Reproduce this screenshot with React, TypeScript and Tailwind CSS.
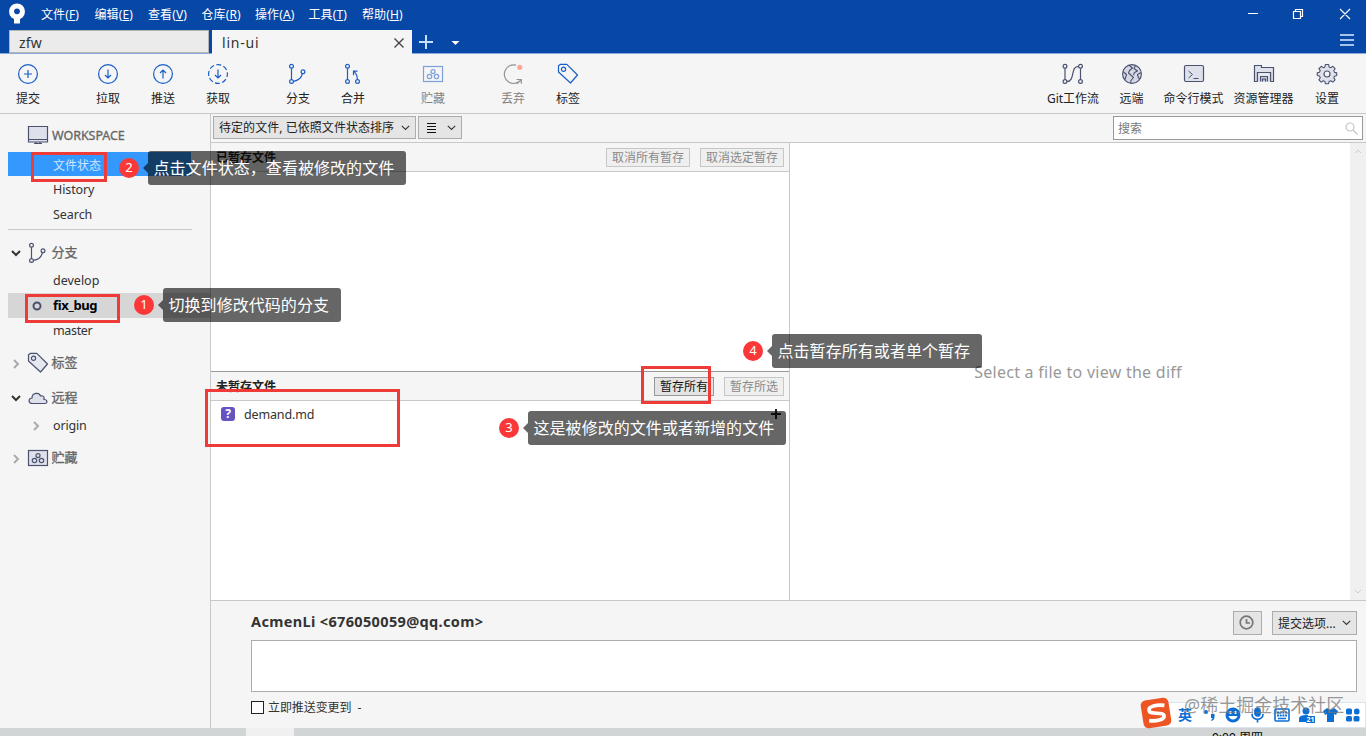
import React from 'react';

type P = { children?: React.ReactNode; className?: string };

const Svg = ({ w = 22, h = 22, children, className = '' }: P & { w?: number; h?: number }) => (
  <svg width={w} height={h} viewBox={`0 0 ${w} ${h}`} fill="none" stroke="currentColor" strokeWidth="1.2" className={`shrink-0 ${className}`}>
    {children}
  </svg>
);

const CommitIcon = () => <Svg><circle cx="11" cy="11" r="9.4" /><path d="M11 7v8M7 11h8" /></Svg>;
const PullIcon = () => <Svg><circle cx="11" cy="11" r="9.4" /><path d="M11 6.5v8.5M8 12l3 3 3-3" /></Svg>;
const PushIcon = () => <Svg><circle cx="11" cy="11" r="9.4" /><path d="M11 15.5V7M8 10l3-3 3 3" /></Svg>;
const FetchIcon = () => (
  <Svg><circle cx="11" cy="11" r="9.4" strokeDasharray="5 2.38" strokeDashoffset="2" /><path d="M11 6.5v8.5M8 12l3 3 3-3" /></Svg>
);
const BranchIcon = () => (
  <Svg><circle cx="4.5" cy="3.3" r="1.9" /><circle cx="4.5" cy="18.5" r="1.9" /><circle cx="16" cy="8.8" r="1.9" /><path d="M4.5 5.2v11.4M6.4 18.3c5-.6 8-3 9-7.6" /></Svg>
);
const MergeIcon = () => (
  <Svg><circle cx="5.5" cy="3.3" r="1.9" /><circle cx="5.5" cy="18.5" r="1.9" /><circle cx="15.5" cy="18.5" r="1.9" /><path d="M5.5 5.2v11.4M15.3 16.600c.2-3.3-.7-5.600-3-8M11.500 12.200V8.200h4" /></Svg>
);
const StashIcon = ({ fill = 'none' }: { fill?: string }) => (
  <Svg><rect x="1.5" y="3.5" width="19" height="15" fill={fill} /><circle cx="11" cy="8.6" r="2" /><circle cx="7.5" cy="13.5" r="2.2" /><circle cx="14.5" cy="13.5" r="2.2" /></Svg>
);
const DiscardIcon = () => (
  <Svg><path d="M14 2.2A9.3 9.3 0 1 0 18.5 17.5M14.5 16.5h4.8v4.2M19.3 16.5l-4.3 4.2" /><circle cx="17.8" cy="4.3" r="2.6" fill="#ff6a45" stroke="none" /></Svg>
);
const TagIcon = ({ fill = 'none' }: { fill?: string }) => (
  <Svg><path d="M1.5 2.8 3.6 1.3h6.2L20.5 12l-7 8L1.5 9z" fill={fill} strokeLinejoin="round" /><circle cx="6.5" cy="6.3" r="2.1" /></Svg>
);
const FlowIcon = () => (
  <Svg><circle cx="3" cy="3.3" r="1.9" /><circle cx="3" cy="18.5" r="1.9" /><circle cx="18.5" cy="3.3" r="1.9" /><circle cx="18.5" cy="18.5" r="1.9" /><path d="M3 5.2v11.4M18.5 5.2v11.4M4.9 18.5C13.5 18.5 8 3.3 16.6 3.3" /></Svg>
);
const GlobeIcon = () => (
  <Svg>
    <circle cx="11" cy="11" r="9.4" fill="#d5d8e4" />
    <path d="M8 2.2 11.5 5 8.500 7.500 7.500 10 12.500 14.500 10 17.500 9.500 20.200M2 8.500 5.500 11.500 4 16.500" strokeWidth="1.1" fill="none" strokeLinejoin="round" />
    <path d="M14.500 2.500 13 5.500 16.500 8 13.500 9.500 12.500 12M20 9.500 16.500 11.500 17.500 15 19 15.500" strokeWidth="1.1" strokeLinejoin="round" />
  </Svg>
);
const TerminalIcon = () => (
  <Svg><rect x="1.5" y="2.5" width="19" height="16" rx="1.5" fill="#dfe1ea" /><path d="m5.5 8 4 3.5-4 3.5M10.5 15.5h5" strokeWidth="1" /></Svg>
);
const FolderIcon = () => (
  <Svg><path d="M1.5 18.5v-16h7v2h12v14h-3v-9h-13v9z" fill="#dfe1ea" /><path d="M4.5 18.5v-9h13v9" fill="#e9ebf1" /><path d="M7.5 18.5v-5h7v5M9.5 18.5v-2.5h3v2.5" fill="#c3cfe0" /></Svg>
);
const GearIcon = () => (
  <Svg>
    <path d="M9.2 1.5h3.6l.5 2.6 1.9.8 2.2-1.5 2.6 2.5-1.5 2.3.8 1.9 2.4.5v3l-2.4.7-.8 1.7 1.4 2.3-2.5 2.5-2.2-1.5-1.9.8-.6 2.4H9.2l-.6-2.4-1.7-.8-2.3 1.5L2.1 18.3 3.6 16l-.9-1.9-2.4-.5v-3l2.4-.6.9-1.9L2.1 5.9l2.5-2.5 2.3 1.5 1.7-.8z" fill="#dfe1ea" strokeLinejoin="round" transform="translate(1 .2) scale(.91)" />
    <circle cx="11" cy="11" r="3" fill="#f5f5f5" />
  </Svg>
);

const Chevron = ({ open = false, className = '' }: { open?: boolean; className?: string }) => (
  <svg width="10" height="10" viewBox="0 0 10 10" fill="none" stroke="currentColor" strokeWidth="2" className={`shrink-0 ${className}`}>
    {open ? <path d="m1 3 4 4 4-4" /> : <path d="m3 1 4 4-4 4" />}
  </svg>
);

const Caret = () => (
  <svg width="9" height="6" viewBox="0 0 9 6" fill="none" stroke="#333" strokeWidth="1.1"><path d="m.8.8 3.7 3.7L8.2.8" /></svg>
);

const Tool = ({ label, children, className = '' }: P & { label: string }) => (
  <div className={`flex shrink-0 flex-col items-center pt-[9px] ${className}`}>
    {children}
    <span className="mt-[5px] whitespace-nowrap text-xs leading-[18px] text-[#222]">{label}</span>
  </div>
);

const SmallButton = ({ children, className = '' }: P) => (
  <div className={`flex shrink-0 items-center justify-center whitespace-nowrap border pt-[2px] text-xs ${className}`}>{children}</div>
);

const menus = [
  ['文件', 'F'], ['编辑', 'E'], ['查看', 'V'], ['仓库', 'R'], ['操作', 'A'], ['工具', 'T'], ['帮助', 'H'],
];

const TitleBar = () => (
  <header className="h-[54px] shrink-0 border-b border-[#8ba9da] bg-[#0747a6] text-white">
    <div className="flex h-[30px] items-start">
      <svg width="18" height="21" viewBox="0 0 18 21" className="ml-2 mt-[3px] shrink-0">
        <circle cx="9" cy="8.5" r="8" fill="#fff" /><path d="M6 13h6v7.5H6z" fill="#fff" /><circle cx="9" cy="8.3" r="2.9" fill="#0747a6" />
      </svg>
      <nav className="ml-[15px] flex pt-[5px] text-xs leading-[19px]">
        {menus.map(([t, k]) => (
          <span key={k} className="w-[53.5px] whitespace-nowrap tracking-[0.1px]">{t}(<u>{k}</u>)</span>
        ))}
      </nav>
      <div className="ml-auto flex items-center pt-2">
        <svg width="104" height="12" viewBox="0 0 104 12" fill="none" stroke="#fff" strokeWidth="1.2" className="mr-[15px]">
          <path d="M1 5.5h10M46.5 3.5h7v7h-7zM48.5 3.5v-2h7v7h-2M93 1l10 10M103 1 93 11" />
        </svg>
      </div>
    </div>
    <div className="flex h-[23px] items-stretch pl-[9px]">
      <div className="w-[200px] border border-[#b5b5b5] bg-[#ebebeb] pl-[9px] text-sm leading-[24px] tracking-[0.2px] text-[#333]">zfw</div>
      <div className="ml-[3px] flex h-6 w-[200px] items-center bg-[#f5f5f5] pl-[10px] pr-2 text-sm leading-6 text-[#333]">
        <span className="pt-[2px] tracking-[0.8px]">lin-ui</span>
        <svg width="10" height="10" viewBox="0 0 10 10" stroke="#444" strokeWidth="1.4" className="ml-auto mt-[2px]"><path d="m.5.5 9 9M9.5.5l-9 9" /></svg>
      </div>
      <svg width="44" height="14" viewBox="0 0 44 14" className="ml-[7px] mt-[5px]">
        <path d="M0 7h14M7 0v14" stroke="#c4e1ff" strokeWidth="2" /><path d="M32.5 6h8l-4 4z" fill="#fff" />
      </svg>
      <svg width="14" height="13" viewBox="0 0 14 13" className="ml-auto mr-3 mt-1"><path d="M0 1h14M0 6h14M0 11h14" stroke="#a9c2ec" strokeWidth="2" /></svg>
    </div>
  </header>
);

const Toolbar = () => (
  <div className="flex h-[60px] shrink-0 border-b border-[#c8c8c8] bg-[#f5f5f5] text-[#1a5dc8]">
    <Tool label="提交" className="w-14"><CommitIcon /></Tool>
    <Tool label="拉取" className="ml-6 w-14"><PullIcon /></Tool>
    <Tool label="推送" className="w-[54px]"><PushIcon /></Tool>
    <Tool label="获取" className="w-14"><FetchIcon /></Tool>
    <Tool label="分支" className="ml-6 w-14"><BranchIcon /></Tool>
    <Tool label="合并" className="w-[54px]"><MergeIcon /></Tool>
    <Tool label="贮藏" className="ml-[25px] w-14 opacity-55"><StashIcon /></Tool>
    <Tool label="丢弃" className="ml-6 w-14 text-[#444] opacity-55"><DiscardIcon /></Tool>
    <Tool label="标签" className="w-[54px]"><TagIcon /></Tool>
    <div className="ml-auto flex text-[#4b5270]">
      <Tool label="Git工作流" className="w-[60px]"><FlowIcon /></Tool>
      <Tool label="远端" className="w-[57px]"><GlobeIcon /></Tool>
      <Tool label="命令行模式" className="w-[67px]"><TerminalIcon /></Tool>
      <Tool label="资源管理器" className="w-[73px]"><FolderIcon /></Tool>
      <Tool label="设置" className="mr-[12px] w-[54px]"><GearIcon /></Tool>
    </div>
  </div>
);

const Section = ({ label, open, children, className = '' }: P & { label: string; open?: boolean }) => (
  <div className={`flex items-center text-[#4b5270] ${className}`}>
    <Chevron open={open} className={open ? 'text-[#333]' : 'mt-[2px] text-[#aaa]'} />
    <span className="ml-[6px] flex w-[24.5px]">{children}</span>
    <span className="-mt-px text-[13px] text-[#666] [-webkit-text-stroke:0.3px]">{label}</span>
  </div>
);

const Sidebar = () => (
  <aside className="flex w-[211px] shrink-0 flex-col border-r border-[#c8c8c8] bg-[#f5f5f5] text-[13px] text-[#333]">
    <div className="flex h-[38px] items-center pl-[27px] pt-[3px] text-[#4b5270]">
      <Svg><path d="M1.5 2.5h19v15.5h-19z" fill="#dfe1ea" /><path d="M2 15.5h18M7 19.5h8M9 18v2M13 18v2" /></Svg>
      <span className="ml-[3px] pt-[4px] text-[12.5px] tracking-[-0.05px] text-[#666] [-webkit-text-stroke:0.3px]">WORKSPACE</span>
    </div>
    <div className="ml-2 mr-[19px] h-6 bg-[#3399ff] pl-[45px] text-xs leading-[27px] text-[#cfe6ff]">文件状态</div>
    <div className="h-[25px] pl-[53px] text-[12.5px] leading-[28px] tracking-[-0.1px]">History</div>
    <div className="h-[25px] pl-[53px] text-[12.5px] leading-[28px] tracking-[-0.05px]">Search</div>
    <div className="ml-2 mr-[18px] mt-[3px] h-px shrink-0 bg-[#c8c8c8]" />
    <Section label="分支" open className="ml-[11px] mt-[11px] h-6"><BranchIcon /></Section>
    <div className="mt-[3px] h-[25px] pl-[53px] text-[12.5px] leading-[26px]">develop</div>
    <div className="ml-2 flex h-[25px] items-center bg-[#d6d6d6]">
      <svg width="10" height="10" viewBox="0 0 10 10" className="ml-6"><circle cx="5" cy="5" r="3.5" fill="none" stroke="#4b5270" strokeWidth="2" /></svg>
      <span className="ml-[11px] pt-px text-[13px] font-bold tracking-[-0.35px] text-black">fix_bug</span>
    </div>
    <div className="h-[25px] pl-[53px] text-[12.5px] leading-[26px] tracking-[-0.35px]">master</div>
    <Section label="标签" className="ml-[11px] mt-2 h-6"><TagIcon fill="#e6e8ef" /></Section>
    <Section label="远程" open className="ml-[11px] mt-[11px] h-6">
      <Svg><path d="M5.5 16.5C1 16.5 1 11.5 5 11c0-5 7-6.5 8.5-2 3-1 4 1.5 3.5 3.5 4 0 3.5 4 1 4z" fill="#dfe1ea" /></Svg>
    </Section>
    <div className="mt-1 flex h-6 items-center pl-[31px]">
      <Chevron className="text-[#aaa]" /><span className="ml-3 pt-px text-[12.5px] tracking-[-0.15px]">origin</span>
    </div>
    <Section label="贮藏" className="ml-[11px] mt-2 h-6"><StashIcon fill="#dfe1ea" /></Section>
  </aside>
);

const disabledBtn = 'border-[#c6c6c6] bg-[#efefef] text-[#8a8a8a]';

const FilePanels = () => (
  <div className="flex w-[579px] shrink-0 flex-col border-r border-[#c8c8c8] bg-white">
    <div className="flex h-[29px] shrink-0 items-center border-b border-[#c8c8c8] bg-[#f5f5f5] pl-[5px] pr-[5px]">
      <span className="mr-auto pt-[2px] text-xs font-bold text-[#222]">已暂存文件</span>
      <SmallButton className={`h-[19px] w-[84px] ${disabledBtn}`}>取消所有暂存</SmallButton>
      <SmallButton className={`ml-[10px] h-[19px] w-[84px] ${disabledBtn}`}>取消选定暂存</SmallButton>
    </div>
    <div className="h-[199px] shrink-0" />
    <div className="flex h-[30px] shrink-0 items-center border-b border-t border-b-[#c8c8c8] border-t-[#999] bg-[#f5f5f5] pl-[5px] pr-[5px]">
      <span className="mr-auto pt-[2px] text-xs font-bold text-[#222]">未暂存文件</span>
      <SmallButton className="h-[19px] w-[60px] border-[#999] bg-[#e3e3e3] text-[#111]">暂存所有</SmallButton>
      <SmallButton className={`ml-[10px] h-[19px] w-[60px] ${disabledBtn}`}>暂存所选</SmallButton>
    </div>
    <div className="flex h-[27px] items-center pl-[10px] pr-2 text-[#333]">
      <span className="mb-px flex h-[14px] w-[14px] items-center justify-center rounded-[3px] bg-[#6554c0] text-xs font-bold text-white">?</span>
      <span className="ml-[9px] pt-[2px] text-[12.5px] tracking-[-0.15px]">demand.md</span>
      <svg width="10" height="10" viewBox="0 0 10 10" stroke="#222" strokeWidth="2" className="mb-px ml-auto"><path d="M0 5h10M5 0v10" /></svg>
    </div>
  </div>
);

const FilterBar = () => (
  <div className="flex h-[29px] shrink-0 items-start border-b border-[#c8c8c8] bg-[#f5f5f5] pl-[2px] pt-[2px] text-[#222]">
    <div className="flex h-[23px] w-[203px] items-center justify-between border border-[#acacac] bg-[#e5e5e5] pl-[5px] pr-[5px] text-xs">
      <span className="whitespace-nowrap pt-px tracking-[0.05px]">待定的文件, 已依照文件状态排序</span><Caret />
    </div>
    <div className="ml-[2px] flex h-[23px] w-11 items-center justify-between border border-[#acacac] bg-[#e5e5e5] pl-[8px] pr-[5px]">
      <svg width="9" height="11" viewBox="0 0 9 11" stroke="#111"><path d="M0 1.5h9M0 4.5h9M0 7.5h9M0 10.5h9" /></svg><Caret />
    </div>
    <div className="ml-auto mr-[3px] flex h-6 w-[250px] items-center justify-between border border-[#999] bg-white pl-[4px] pr-[4px] text-xs text-[#777]">
      <span className="pt-[2px]">搜索</span>
      <svg width="13" height="13" viewBox="0 0 13 13" fill="none" stroke="#c4c4c4" strokeWidth="1.2"><circle cx="5" cy="5" r="4" /><path d="m8 8 4.5 4.5" /></svg>
    </div>
  </div>
);

const CommitPanel = () => (
  <section className="flex h-[128px] shrink-0 flex-col border-t border-[#c8c8c8] bg-[#f5f5f5] pl-10 pr-[9px]">
    <div className="flex h-[39px] items-center">
      <span className="pt-[2px] text-[14.5px] font-bold tracking-[0.35px] text-[#333]">AcmenLi &lt;676050059@qq.com&gt;</span>
      <div className="ml-auto mt-[5px] flex h-6 w-[29px] items-center justify-center border border-[#acacac] bg-[#e5e5e5]">
        <svg width="15" height="15" viewBox="0 0 15 15" fill="none" stroke="#777" strokeWidth="1.7" className="mb-[2px] mr-[2px]"><circle cx="7.5" cy="7.5" r="6.3" /><path d="M7.5 4v4h3.5" /></svg>
      </div>
      <div className="ml-[10px] mt-[5px] flex h-6 w-[85px] items-center justify-between border border-[#acacac] bg-[#e5e5e5] pl-[5px] pr-[5px] text-xs text-[#222]">
        <span className="pt-[2px]">提交选项...</span><Caret />
      </div>
    </div>
    <div className="h-[52px] shrink-0 border border-[#acacac] bg-white" />
    <div className="mt-[5px] flex h-5 items-center text-xs text-[#333]">
      <span className="mr-1 h-[13px] w-[13px] border border-[#222] bg-white" /><span className="pt-[2px] tracking-[-0.08px]">立即推送变更到&nbsp; -</span>
    </div>
  </section>
);

const Callout = ({ n, text, className, box }: { n: number; text: string; className: string; box: string }) => (
  <div className={`absolute flex items-center ${className}`}>
    <span className="flex h-5 w-5 shrink-0 items-center justify-center rounded-full bg-[#fb3838] text-[13px] text-white">{n}</span>
    <svg width="5" height="10" viewBox="0 0 5 10" className="ml-[4px] shrink-0"><path d="M5 0v10L0 5z" fill="#000" fillOpacity=".6" /></svg>
    <span className={`flex h-[34px] items-center whitespace-nowrap rounded-[3px] bg-black/60 pl-[5.5px] text-base tracking-[0.05px] text-white ${box}`}>{text}</span>
  </div>
);

const ImeBar = () => (
  <div className="absolute left-[1145px] top-[702px] h-[26px] w-[221px] border border-[#dce4f0] bg-white">
    <div className="absolute left-[-4px] top-[-4px] flex h-[28px] w-[28px] rotate-[-9deg] items-center justify-center rounded-[5px] bg-[#ee5524] text-white">
      <svg width="23" height="23" viewBox="0 0 23 23" fill="none" stroke="#fff" strokeWidth="3.7"><path d="M20.5 4.8C13 2.5 4.5 3.2 4.5 7.3c0 5.2 14 3 14 7.7 0 4-8.5 4.5-15.5 2.5" /></svg>
    </div>
    <div className="flex h-full items-center gap-[9px] pl-[32px] text-[#0b6fd6]">
      <span className="text-[14px] font-bold leading-none">英</span>
      <svg width="15" height="15" viewBox="0 0 15 15" fill="currentColor"><circle cx="5" cy="4" r="2" /><path d="M10 6h3.5v3c0 2-1 3-3 4l-.5-1c1-.7 1.5-1 1.5-2H10z" /></svg>
      <svg width="16" height="16" viewBox="0 0 16 16"><circle cx="8" cy="8" r="7.5" fill="currentColor" /><path d="M5.5 4v3M10.5 4v3" stroke="#fff" strokeWidth="1.8" /><path d="M3.5 9h9c-1 4.5-8 4.5-9 0z" fill="#fff" /></svg>
      <svg width="15" height="16" viewBox="0 0 15 16" fill="none" stroke="currentColor" strokeWidth="1.7"><rect x="5" y="1" width="5" height="8" rx="2.5" fill="currentColor" /><path d="M2 7c0 7 11 7 11 0M7.5 12v3.5" /></svg>
      <svg width="16" height="14" viewBox="0 0 16 14"><rect x="1" y="1" width="14" height="12" rx="1" fill="none" stroke="currentColor" strokeWidth="1.6" /><path d="M3 4.5h10M3 7.5h10" stroke="currentColor" strokeWidth="1.8" strokeDasharray="2 .7" /><path d="M4 10.5h8" stroke="currentColor" strokeWidth="1.5" /></svg>
      <svg width="16" height="16" viewBox="0 0 16 16" fill="currentColor"><circle cx="7" cy="4" r="3.5" /><path d="M0 15V11q1-3 7-3h2v7zM7 9h9v7H7z" /><text x="7.5" y="15" fontSize="7" fontWeight="bold" fill="#fff">21</text></svg>
      <svg width="15" height="14" viewBox="0 0 15 14" fill="currentColor" className="-ml-px"><path d="M4 0q3.5 3 7 0l4 3-2 4-2-1v8H4V6L2 7 0 3z" /></svg>
      <svg width="14" height="14" viewBox="0 0 14 14" fill="currentColor" className="-ml-px"><rect y=".5" width="6" height="6" rx="1.5" /><rect x="8" y=".5" width="5.5" height="6" rx="2.5" /><rect y="8" width="6" height="5.5" rx="1.5" /><rect x="7.5" y="8" width="6" height="5.5" rx="1.5" /></svg>
    </div>
  </div>
);

export default function App() {
  return (
    <div className="relative flex h-[736px] w-[1366px] flex-col overflow-hidden bg-[#f5f5f5] font-['Noto_Sans','Noto_Sans_CJK_SC',sans-serif]">
      <TitleBar />
      <Toolbar />
      <div className="flex h-[614px] shrink-0">
        <Sidebar />
        <main className="flex min-w-0 flex-1 flex-col">
          <FilterBar />
          <div className="flex h-[457px]">
            <FilePanels />
            <div className="flex flex-1 items-center justify-center bg-white pl-[16px] text-base tracking-[0.26px] text-[#999]">Select a file to view the diff</div>
            <div className="flex w-4 shrink-0 flex-col items-center justify-between bg-[#f0f0f0] py-[5px] text-[#ccc]">
              <svg width="8" height="6" viewBox="0 0 8 6" fill="none" stroke="currentColor"><path d="m1 5 3-3 3 3" /></svg>
              <svg width="8" height="6" viewBox="0 0 8 6" fill="none" stroke="currentColor"><path d="m1 1 3 3 3-3" /></svg>
            </div>
          </div>
          <CommitPanel />
        </main>
      </div>
      <footer className="flex h-2 shrink-0 overflow-hidden bg-[#d2d5d5]">
        <div className="ml-[246px] h-2 w-12 bg-[#f0f0f0]" />
        <span className="ml-[918px] mt-[3px] whitespace-nowrap text-xs leading-[14px] text-black">9:09 周四</span>
      </footer>

      <div className="absolute left-[31px] top-[152px] h-[30px] w-[76px] border-[3px] border-[#ee3b38]" />
      <div className="absolute left-[25px] top-[294px] h-[29px] w-[95px] border-[3px] border-[#ee3b38]" />
      <div className="absolute left-[205px] top-[389px] h-[58px] w-[195px] border-[3px] border-[#ee3b38]" />
      <div className="absolute left-[641px] top-[366px] h-[38px] w-[70px] border-[3px] border-[#ee3b38]" />
      <Callout n={2} text="点击文件状态，查看被修改的文件" className="left-[119px] top-[151px]" box="w-[258px]" />
      <Callout n={1} text="切换到修改代码的分支" className="left-[134px] top-[288px]" box="w-[178px]" />
      <Callout n={4} text="点击暂存所有或者单个暂存" className="left-[743px] top-[334px]" box="w-[210px]" />
      <Callout n={3} text="这是被修改的文件或者新增的文件" className="left-[499px] top-[411px]" box="w-[258px]" />
      <ImeBar />
      <div className="absolute left-[1184px] top-[692px] whitespace-nowrap text-lg leading-[26px] text-[#777]/75">@稀土掘金技术社区</div>
    </div>
  );
}
